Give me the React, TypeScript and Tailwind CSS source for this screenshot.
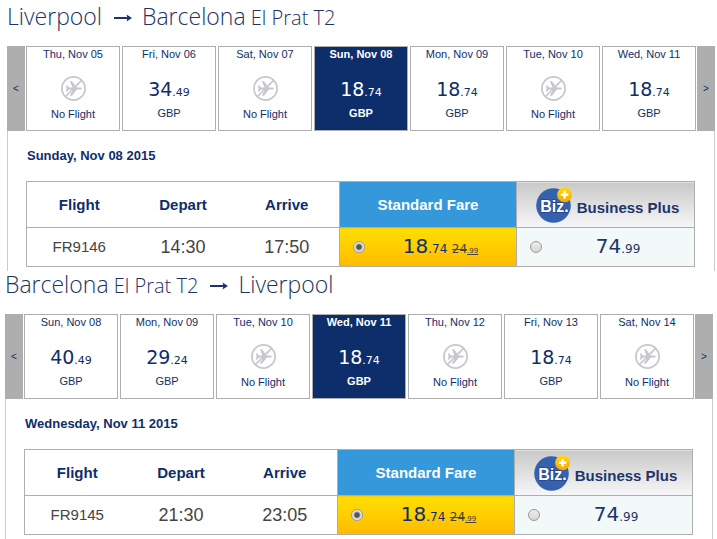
import { useState } from "react";
import clsx from "clsx";

type Day = { label: string; price?: string };

type Leg = {
  id: string;
  from: string;
  fromSub?: string;
  to: string;
  toSub?: string;
  days: Day[];
  initial: number;
  date: string;
  flight: string;
  depart: string;
  arrive: string;
};

const LEGS: Leg[] = [
  {
    id: "out",
    from: "Liverpool",
    to: "Barcelona",
    toSub: "El Prat T2",
    days: [
      { label: "Thu, Nov 05" },
      { label: "Fri, Nov 06", price: "34.49" },
      { label: "Sat, Nov 07" },
      { label: "Sun, Nov 08", price: "18.74" },
      { label: "Mon, Nov 09", price: "18.74" },
      { label: "Tue, Nov 10" },
      { label: "Wed, Nov 11", price: "18.74" },
    ],
    initial: 3,
    date: "Sunday, Nov 08 2015",
    flight: "FR9146",
    depart: "14:30",
    arrive: "17:50",
  },
  {
    id: "back",
    from: "Barcelona",
    fromSub: "El Prat T2",
    to: "Liverpool",
    days: [
      { label: "Sun, Nov 08", price: "40.49" },
      { label: "Mon, Nov 09", price: "29.24" },
      { label: "Tue, Nov 10" },
      { label: "Wed, Nov 11", price: "18.74" },
      { label: "Thu, Nov 12" },
      { label: "Fri, Nov 13", price: "18.74" },
      { label: "Sat, Nov 14" },
    ],
    initial: 3,
    date: "Wednesday, Nov 11 2015",
    flight: "FR9145",
    depart: "21:30",
    arrive: "23:05",
  },
];

function NoFlightIcon() {
  return (
    <svg width="25" height="25" viewBox="0 0 25 25" fill="none" stroke="#c6c8ce" aria-hidden="true">
      <circle cx="12.5" cy="12.5" r="11.6" strokeWidth="1.8" />
      <path d="M4.4 20.6 20.6 4.4" strokeWidth="1.6" />
      <path
        d="M4.8 9.4h1.5l1.7 2.1h3.6L8.9 5.2h2l5 6.3h2.9c1.2 0 2 .5 2 1s-.8 1-2 1h-2.900l-5 6.300h-2l2.700-6.300H8l-1.700 2.100H4.800l.8-3.100z"
        fill="#c6c8ce"
        stroke="#fff"
        strokeWidth="1.2"
        paintOrder="stroke"
      />
      <path d="M10 15 17 8" strokeWidth="1.4" />
    </svg>
  );
}

function BizIcon() {
  return (
    <svg width="37" height="36" viewBox="0 0 37 36" aria-hidden="true">
      <defs>
        <linearGradient id="plus" x1="0" y1="0" x2="0" y2="1">
          <stop offset="0" stopColor="#ffdb12" />
          <stop offset="1" stopColor="#f5a60b" />
        </linearGradient>
      </defs>
      <circle cx="17.5" cy="18.5" r="17.3" fill="#3562ae" />
      <text
        x="18.5"
        y="25"
        textAnchor="middle"
        fill="#fff"
        stroke="#24458a"
        strokeWidth="1.6"
        paintOrder="stroke"
        fontSize="16"
        fontWeight="bold"
        fontFamily="'Liberation Sans', sans-serif"
      >
        Biz.
      </text>
      <circle cx="28.6" cy="7.7" r="7.5" fill="url(#plus)" />
      <path d="M28.6 4v7.4M24.9 7.7h7.4" stroke="#fff" strokeWidth="2.4" />
    </svg>
  );
}

function Arrow() {
  return (
    <svg width="18" height="9" viewBox="0 0 18 9" className="mr-2.5 ml-3 inline-block" aria-hidden="true">
      <path d="M0 4h15" stroke="#1c3468" strokeWidth="2" />
      <path d="M12.5.6 18 4l-5.500 3.400 1-3.400z" fill="#1c3468" />
    </svg>
  );
}

function Place({ name, sub }: { name: string; sub?: string }) {
  return (
    <span>
      {name}
      {sub && <span className="text-[20px] leading-none"> {sub}</span>}
    </span>
  );
}

function Price({ value, large }: { value: string; large?: boolean }) {
  const [whole, cents] = value.split(".");
  return (
    <span className={clsx("font-['DejaVu_Sans',sans-serif] leading-6", large ? "text-[20px]" : "text-[19px]")}>
      {whole}
      <span className={clsx("leading-none", large ? "text-[12px]" : "text-[11px]")}>.{cents}</span>
    </span>
  );
}

function Radio({ name, value, checked }: { name: string; value: string; checked?: boolean }) {
  return (
    <input
      type="radio"
      name={name}
      value={value}
      defaultChecked={checked}
      className="size-3 shrink-0 appearance-none rounded-full border border-[#999] bg-linear-to-b from-[#eee] to-[#d6d6d6] checked:bg-[radial-gradient(circle,#555_2px,#e6e6e6_4px)]"
    />
  );
}

function Calendar({ leg }: { leg: Leg }) {
  const [active, setActive] = useState(leg.initial);
  const step = "w-[18px] shrink-0 bg-[#aeaeae] text-[10px] text-[#0d2e6b]";
  return (
    <div className="flex h-[85px] gap-px">
      <button aria-label="Previous days" className={step}>&lt;</button>
      <div className="grid flex-1 grid-cols-7 gap-0.5">
        {leg.days.map((d, i) => (
          <button
            key={d.label}
            onClick={() => setActive(i)}
            className={clsx(
              "flex flex-col items-center border border-[#aeaeae] text-[11px] leading-[14px]",
              i === active ? "bg-[#0d2e6b] font-bold text-white" : "text-[#0d2e6b]",
            )}
          >
            <span>{d.label}</span>
            {d.price ? (
              <>
                <span className="mt-3.5 flex h-7 items-center font-normal"><Price value={d.price} /></span>
                <span className="mt-[3px]">GBP</span>
              </>
            ) : (
              <>
                <span className="mt-[15px]"><NoFlightIcon /></span>
                <span className="mt-1.5">No Flight</span>
              </>
            )}
          </button>
        ))}
      </div>
      <button aria-label="Next days" className={step}>&gt;</button>
    </div>
  );
}

function Fares({ leg }: { leg: Leg }) {
  const name = `fare-${leg.id}`;
  const cell = "border border-[#aeaeae] p-0";
  return (
    <div className="pr-[19px] pl-[18px]">
      <table className="w-full table-fixed border-collapse text-center">
        <colgroup>
          <col className="w-[105px]" />
          <col className="w-[103px]" />
          <col className="w-[105px]" />
          <col className="w-[177px]" />
          <col />
        </colgroup>
        <thead>
          <tr className="h-[46px] text-[15px] text-[#0d2e6b]">
            <th className="border-y border-l border-[#aeaeae] p-0 pt-0.5">Flight</th>
            <th className="border-y border-[#aeaeae] p-0 pt-0.5">Depart</th>
            <th className="border-y border-[#aeaeae] p-0 pt-0.5">Arrive</th>
            <th className="border border-[#aeaeae] bg-[#3498db] p-0 pt-0.5 text-white">Standard Fare</th>
            <th className={clsx(cell, "bg-linear-to-b from-[#c9c9c9] to-[#f7f7f9] text-[#22356b]")}>
              <div className="flex items-center justify-center gap-1 pl-1">
                <BizIcon />
                <span className="pt-2">Business Plus</span>
              </div>
            </th>
          </tr>
        </thead>
        <tbody>
          <tr className="h-[39px] text-[#444]">
            <td className="border-y border-l border-[#aeaeae] p-0 text-[15px]">{leg.flight}</td>
            <td className="border-y border-[#aeaeae] p-0 text-[18px]">{leg.depart}</td>
            <td className="border-y border-[#aeaeae] p-0 text-[18px]">{leg.arrive}</td>
            <td className={clsx(cell, "bg-linear-to-b from-[#ffdf00] to-[#ffba00]")}>
              <label className="flex items-center pl-[13px] text-[#0d2e6b]">
                <Radio name={name} value="standard" checked />
                <span className="flex-1">
                  <Price value="18.74" large />{" "}
                  <s className="font-['DejaVu_Sans',sans-serif] text-[12px] text-[#444]">
                    24<span className="text-[7px]">.99</span>
                  </s>
                </span>
              </label>
            </td>
            <td className={clsx(cell, "bg-[#f3f8f9]")}>
              <label className="flex items-center pl-[13px] text-[#22356b]">
                <Radio name={name} value="business" />
                <span className="flex-1"><Price value="74.99" large /></span>
              </label>
            </td>
          </tr>
        </tbody>
      </table>
    </div>
  );
}

export default function App() {
  return (
    <main className="bg-white pt-[3px] font-['Liberation_Sans',Arial,sans-serif]">
      {LEGS.map((leg) => (
        <section key={leg.id} className={leg.id === "out" ? "mr-0.5 ml-[7px]" : "mr-1 ml-[5px]"}>
          <h2 className="h-[43px] font-['Open_Sans',sans-serif] text-[23px] leading-[26px] font-light whitespace-nowrap text-[#1c3468]">
            <Place name={leg.from} sub={leg.fromSub} />
            <Arrow />
            <Place name={leg.to} sub={leg.toSub} />
          </h2>
          <Calendar leg={leg} />
          <div className="h-[140px] border-x border-[#ccc]">
            <h3 className="py-4 pl-[19px] text-[13px] leading-[18px] font-bold text-[#0d2e6b]">{leg.date}</h3>
            <Fares leg={leg} />
          </div>
        </section>
      ))}
    </main>
  );
}
